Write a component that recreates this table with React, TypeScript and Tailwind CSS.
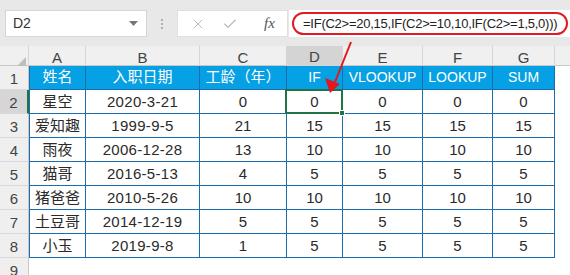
import React from 'react'
import { X, Check } from 'lucide-react'

const COLS = ['A', 'B', 'C', 'D', 'E', 'F', 'G']

const HEADERS = [
  { text: '姓名', latin: false },
  { text: '入职日期', latin: false },
  { text: '工龄（年）', latin: false },
  { text: 'IF', latin: true },
  { text: 'VLOOKUP', latin: true },
  { text: 'LOOKUP', latin: true },
  { text: 'SUM', latin: true },
]

const ROWS: (string | number)[][] = [
  ['星空', '2020-3-21', 0, 0, 0, 0, 0],
  ['爱知趣', '1999-9-5', 21, 15, 15, 15, 15],
  ['雨夜', '2006-12-28', 13, 10, 10, 10, 10],
  ['猫哥', '2016-5-13', 4, 5, 5, 5, 5],
  ['猪爸爸', '2010-5-26', 10, 10, 10, 10, 10],
  ['土豆哥', '2014-12-19', 5, 5, 5, 5, 5],
  ['小玉', '2019-9-8', 1, 5, 5, 5, 5],
]

const gridCols = 'grid grid-cols-[29px_57px_114px_87px_56px_80px_70px_62px_1fr]'

function RowHeader({ n, active }: { n: number; active?: boolean }) {
  return (
    <div
      className={
        'h-[24px] flex items-center justify-center pt-[3px] text-[15px] text-[#444] border-b border-[#d9d9d9] ' +
        (active
          ? 'bg-[#d6d6d6] border-r-2 border-r-[#217346]'
          : 'bg-[#efefef] border-r border-r-[#c8c8c8]')
      }
    >
      {n}
    </div>
  )
}

export default function App() {
  return (
    <div className="w-[570px] h-[275px] overflow-hidden bg-white relative font-['Liberation_Sans','Noto_Sans_CJK_SC',sans-serif]">
      {/* Formula bar */}
      <div className="h-[46px] bg-[#e8e8e8] flex items-start pt-[10px]">
        <div className="ml-[5px] w-[142px] h-[27px] bg-white border border-[#d6d6d6] flex items-center justify-between pl-[7px] pr-[8px]">
          <span className="text-[14px] text-[#333]">D2</span>
          <svg width="9" height="5" viewBox="0 0 9 5">
            <path d="M0 0h9L4.5 5z" fill="#777" />
          </svg>
        </div>
        <div className="w-[30px] h-[27px] flex flex-col items-center justify-center gap-[2px]">
          <span className="w-[2px] h-[2px] bg-[#b0b0b0]" />
          <span className="w-[2px] h-[2px] bg-[#b0b0b0]" />
          <span className="w-[2px] h-[2px] bg-[#b0b0b0]" />
        </div>
        <div className="w-[111px] h-[27px] bg-white border border-[#e0e0e0] flex items-center pl-[12px]">
          <X size={16} strokeWidth={1.4} color="#b4b4b4" />
          <Check size={16} strokeWidth={1.6} color="#b4b4b4" className="ml-[16px]" />
          <span className="ml-[26px] font-['Liberation_Serif',serif] italic text-[15px] text-[#555]">fx</span>
        </div>
        <div className="flex-1 h-[27px] bg-white ml-[1px] pl-[3px] pt-[2px]">
          <div className="h-[23px] w-[276px] border-2 border-[#e01b22] rounded-[12px] flex items-center pl-[9px]">
            <span className="text-[13px] tracking-[-0.25px] text-[#222] whitespace-nowrap">
              =IF(C2&gt;=20,15,IF(C2&gt;=10,10,IF(C2&gt;=1,5,0)))
            </span>
          </div>
        </div>
      </div>

      {/* Column headers */}
      <div className={gridCols + ' h-[20px] bg-[#f0f0f0] border-b border-[#c8c8c8]'}>
        <div className="border-r border-[#d6d6d6] flex items-end justify-end pr-[2px] pb-[2px]">
          <svg width="12" height="12" viewBox="0 0 12 12">
            <path d="M12 0V12H0z" fill="#bdbdbd" />
          </svg>
        </div>
        {COLS.map((c) => (
          <div
            key={c}
            className={
              'flex items-center justify-center text-[15px] text-[#444] border-r border-[#d6d6d6] ' +
              (c === 'D' ? 'bg-[#d4d4d4] border-b-2 border-b-[#217346]' : '')
            }
          >
            {c}
          </div>
        ))}
        <div />
      </div>

      {/* Sheet rows */}
      <div className={gridCols}>
        <RowHeader n={1} />
        {HEADERS.map((h, i) => (
          <div
            key={h.text}
            className={
              'h-[24px] bg-[#06a0e4] text-white flex items-center justify-center border-b border-r border-[#1b6db0] ' +
              (h.latin ? 'text-[14px] ' : 'text-[15px] ') +
              (i === 0 ? 'border-l' : '')
            }
          >
            {h.text}
          </div>
        ))}
        <div className="h-[24px]" />

        {ROWS.map((row, r) => (
          <React.Fragment key={r}>
            <RowHeader n={r + 2} active={r === 0} />
            {row.map((v, c) => (
              <div
                key={c}
                className={
                  'h-[24px] flex items-center justify-center pt-[1px] text-[15px] text-[#2a2a2a] border-b border-r border-[#1b6db0] ' +
                  (c === 0 ? 'border-l ' : '') +
                  (c === 1 ? 'tracking-[0.3px] ' : '') +
                  (r === 0 && c === 3 ? 'relative' : '')
                }
              >
                {v}
                {r === 0 && c === 3 && (
                  <div className="absolute -left-[2px] -top-[1px] -right-[1px] -bottom-[1px] border-2 border-[#217346]">
                    <div className="absolute -right-[4px] -bottom-[4px] w-[6px] h-[6px] bg-[#217346] border border-white" />
                  </div>
                )}
              </div>
            ))}
            <div className="h-[24px]" />
          </React.Fragment>
        ))}

        <RowHeader n={9} />
      </div>

      {/* Red annotation arrow */}
      <svg className="absolute left-0 top-0 pointer-events-none" width="570" height="275">
        <line x1="351" y1="42" x2="335" y2="82" stroke="#e3161e" strokeWidth="2" />
        <path d="M330 93 L325 78 L340 84 Z" fill="#e3161e" />
      </svg>
    </div>
  )
}
